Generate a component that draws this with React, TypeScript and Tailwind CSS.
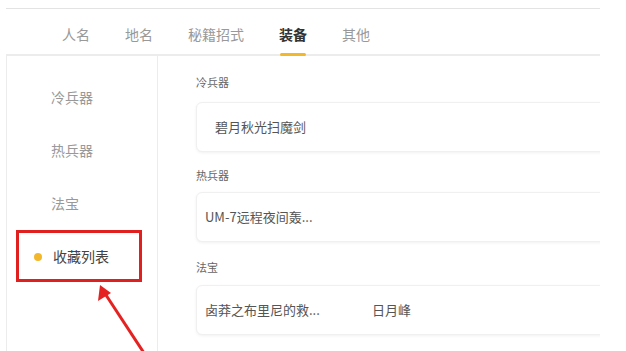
import React from 'react'

const tabs = ['人名', '地名', '秘籍招式', '装备', '其他']
const sideItems = ['冷兵器', '热兵器', '法宝', '收藏列表']

const font = { fontFamily: '"Noto Sans CJK SC", "Noto Sans", sans-serif' }

function Card({ children, className = '' }: { children: React.ReactNode; className?: string }) {
  return (
    <div
      className={`flex h-[50px] w-[430px] items-center rounded-md border border-[#f0f0f0] bg-white shadow-[0_1px_3px_rgba(0,0,0,0.06)] ${className}`}
    >
      {children}
    </div>
  )
}

export default function App() {
  return (
    <div className="relative h-[351px] w-[626px] overflow-hidden bg-white" style={font}>
      <div className="ml-[6px] mt-[8px] w-[594px] border-t border-[#e3e3e3]">
        {/* tabs */}
        <div className="flex h-[47px] items-start gap-[35px] border-b-2 border-[#ececec] pl-[56px] pt-[15px]">
          {tabs.map((t) => {
            const active = t === '装备'
            return (
              <div key={t} className="flex shrink-0 flex-col items-center">
                <span
                  className={`text-[14px] leading-5 ${active ? 'font-semibold text-[#333]' : 'text-[#999]'}`}
                >
                  {t}
                </span>
                {active && <span className="mt-[9px] block h-[3px] w-[26px] shrink-0 rounded-sm bg-[#f3b72c]" />}
              </div>
            )
          })}
        </div>

        {/* body */}
        <div className="flex h-[300px]">
          <div className="w-[152px] border-l border-r border-[#ececec] pt-[15px]">
            {sideItems.map((s) => {
              const active = s === '收藏列表'
              return (
                <div key={s} className="flex h-[53px] items-center">
                  {active ? (
                    <div className="flex items-center pl-[27px]">
                      <span className="h-[8px] w-[8px] rounded-full bg-[#f3b72c]" />
                      <span className="ml-[11px] text-[14px] text-[#444]">{s}</span>
                    </div>
                  ) : (
                    <span className="pl-[44px] text-[14px] text-[#999]">{s}</span>
                  )}
                </div>
              )
            })}
          </div>

          <div className="flex-1 overflow-hidden pl-[38px] pt-[18px]">
            <div className="text-[11px] leading-4 text-[#666]">冷兵器</div>
            <Card className="mt-[12px]">
              <span className="pl-[18px] text-[13px] text-[#555]">碧月秋光扫魔剑</span>
            </Card>

            <div className="mt-[15px] text-[11px] leading-4 text-[#666]">热兵器</div>
            <Card className="mt-[9px]">
              <span className="w-[160px] truncate pl-[8px] text-[13px] text-[#555]">UM-7远程夜间轰...</span>
            </Card>

            <div className="mt-[17px] text-[11px] leading-4 text-[#666]">法宝</div>
            <Card className="mt-[10px]">
              <span className="w-[175px] pl-[8px] text-[13px] text-[#555]">卤莽之布里尼的救...</span>
              <span className="text-[13px] text-[#555]">日月峰</span>
            </Card>
          </div>
        </div>
      </div>

      {/* annotation */}
      <div className="absolute left-[16px] top-[230px] h-[52px] w-[126px] border-[3px] border-[#e0201e]" />
      <svg className="absolute left-0 top-0" width="626" height="351" viewBox="0 0 626 351">
        <line x1="144" y1="353" x2="104" y2="292" stroke="#e52222" strokeWidth="3" />
        <polygon points="100,285 98,301 111,293" fill="#e52222" />
      </svg>
    </div>
  )
}
